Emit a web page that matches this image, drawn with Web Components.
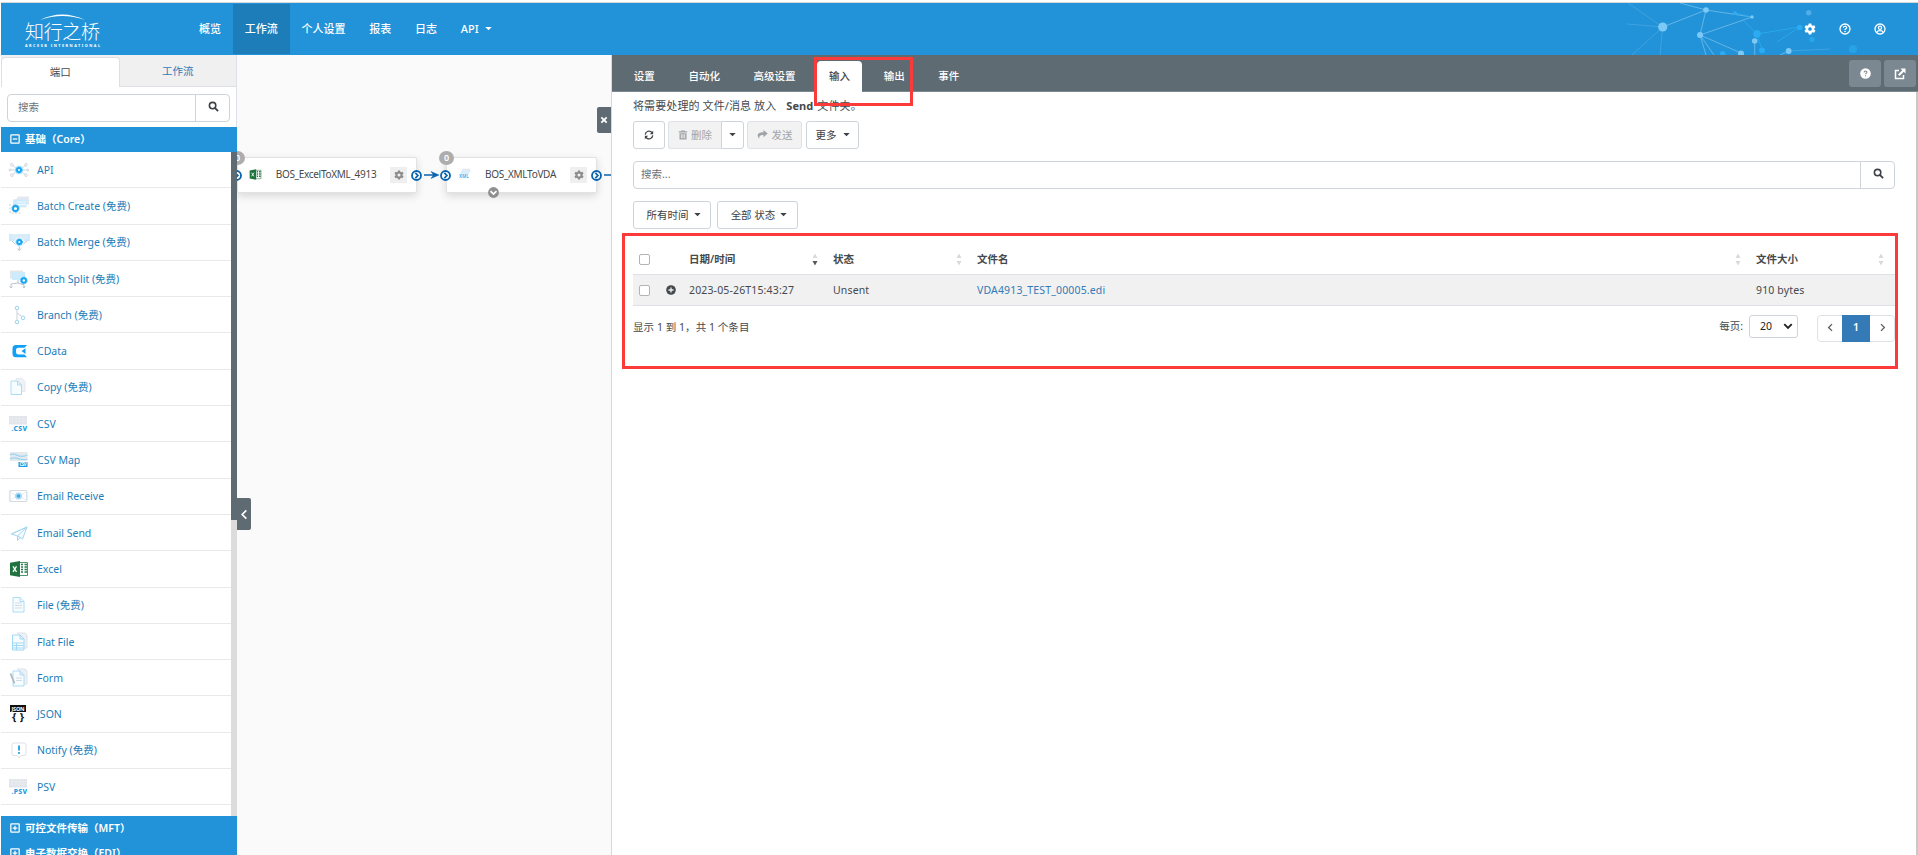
<!DOCTYPE html>
<html lang="zh-CN">
<head>
<meta charset="utf-8">
<title>知行之桥</title>
<style>
  body {
    margin: 0;
    background: #fff;
    color: #45494d;
    font-family: "Noto Sans", "Noto Sans CJK SC", sans-serif;
    font-size: 10.5px;
    line-height: 16px;
    overflow: hidden;
  }
</style>
</head>
<body>
<app-shell></app-shell>

<script>
const BASE = `
  *, :host { box-sizing: border-box; }
  svg { display: block; flex: none; }
`;

const BLUE = '#2293d8';

// 24x24 interface glyphs
const GLYPHS = {
  search: '<circle cx="10" cy="10" r="7" fill="none" stroke="currentColor" stroke-width="3.4"/><path d="M15 15l7 7" stroke="currentColor" stroke-width="4"/>',
  gear: '<path fill="currentColor" fill-rule="evenodd" d="M9.5 1h5l.7 3.2 2 1.1L20.400 4.300l2.500 4.300-2.400 2.300v2.200l2.400 2.300-2.500 4.300-3.200-1-2 1.100-.7 3.200h-5l-.7-3.200-2-1.100-3.200 1-2.500-4.300 2.400-2.300v-2.200L1.100 8.600l2.500-4.300 3.200 1 2-1.100zM12 8.300a3.700 3.700 0 1 0 0 7.400a3.700 3.700 0 0 0 0-7.400z"/>',
  help: '<circle cx="12" cy="12" r="10" fill="none" stroke="currentColor" stroke-width="2.600"/><path d="M8.700 9.800c0-4.500 7-4.300 6.600-.4-.2 2-3.200 2.200-3.200 4.400" fill="none" stroke="currentColor" stroke-width="2.400"/><circle cx="12" cy="17" r="1.600" fill="currentColor"/>',
  helpFull: '<circle cx="12" cy="12" r="11.500" fill="currentColor"/><path d="M8.900 9.800c0-4.300 6.600-4.100 6.200-.4-.2 2-3 2.100-3 4.200" fill="none" stroke="#7b8791" stroke-width="2.200"/><circle cx="12" cy="17" r="1.400" fill="#7b8791"/>',
  user: '<circle cx="12" cy="12" r="10" fill="none" stroke="currentColor" stroke-width="2.600"/><circle cx="12" cy="9.500" r="3.200" fill="none" stroke="currentColor" stroke-width="2.400"/><path d="M5.500 19c1.500-5 11.500-5 13 0" fill="none" stroke="currentColor" stroke-width="2.400"/>',
  external: '<path d="M10 5H3v16h16v-7" fill="none" stroke="currentColor" stroke-width="3"/><path d="M13 1h10v10l-3.500-3.500-8.500 8.500-3-3 8.500-8.500z" fill="currentColor"/>',
  refresh: '<path d="M3 11a9 9 0 0 1 16-5M21 13a9 9 0 0 1-16 5" fill="none" stroke="currentColor" stroke-width="3"/><path d="M22 2v8h-8zM2 22v-8h8z" fill="currentColor"/>',
  trash: '<path fill="currentColor" fill-rule="evenodd" d="M8 1h8l1 2h5v3H2V3h5zM3.500 7.500h17V23h-17zM7 10v10h2V10zm4 0v10h2V10zm4 0v10h2V10z"/>',
  share: '<path d="M14 2l9.500 8-9.500 8v-5c-6-.3-9 1-9.500 8C-.500 14-.500 7.500 14 7z" fill="currentColor"/>',
  caret: '<path d="M1 6.500h22L12 18z" fill="currentColor"/>',
  close: '<path d="M4 4l16 16M20 4L4 20" stroke="currentColor" stroke-width="5.500"/>',
  left: '<path d="M16 3l-9 9 9 9" fill="none" stroke="currentColor" stroke-width="3.600"/>',
  right: '<path d="M8 3l9 9-9 9" fill="none" stroke="currentColor" stroke-width="3.600"/>',
  down: '<path d="M3 7.500l9 9 9-9" fill="none" stroke="currentColor" stroke-width="4.500"/>',
  plus: '<rect x="2" y="2" width="20" height="20" rx="1" fill="none" stroke="currentColor" stroke-width="3"/><path d="M6.500 12h11M12 6.500v11" stroke="currentColor" stroke-width="3"/>',
  minus: '<rect x="2" y="2" width="20" height="20" rx="1" fill="none" stroke="currentColor" stroke-width="3"/><path d="M6.500 12h11" stroke="currentColor" stroke-width="3"/>',
  plusFull: '<circle cx="12" cy="12" r="11.500" fill="currentColor"/><path d="M6 12h12M12 6v12" stroke="#f1f1f1" stroke-width="3.200"/>',
  dock: '<circle cx="12" cy="12" r="9.800" fill="#fff" stroke="#0b63ae" stroke-width="4"/><path d="M9.500 6.500l5.500 5.500-5.500 5.500" fill="none" stroke="#0b63ae" stroke-width="3.800"/>',
  dockDown: '<circle cx="12" cy="12" r="11.800" fill="#8f8f8f"/><path d="M5.500 9l6.500 6.500L18.500 9" fill="none" stroke="#fff" stroke-width="3.600"/>',
};

const COG = (x, y, r = 2.2) => `<circle cx="${x}" cy="${y}" r="${r}" fill="#fff" stroke="#16a5f3" stroke-width="1.900"/><circle cx="${x}" cy="${y}" r="${r + 1.2}" fill="none" stroke="#16a5f3" stroke-width=".9" stroke-dasharray="1.200 1.100"/>`;
const SHEET = (x, y, w, h, c) => `<path d="M${x} ${y}h${w - 4}l4 4v${h - 4}h-${w}z M${x + w - 4} ${y}v4h4" fill="#f7fcff" stroke="${c}" stroke-width="1"/>`;
const GRID = '<rect x="0" y="2" width="18" height="8.500" fill="#e1e4ea"/><path d="M0 4.500h18M0 7h18M3.500 2v8M7 2v8M10.500 2v8M14 2v8" stroke="#eef0f3" stroke-width=".5"/>';

// 20x20 port pictures
const PORT_ICONS = {
  api: `<g fill="none" stroke="#cfd5dd" stroke-width="1"><path d="M1.500 10h17M3 5l4 3M17 5l-4 3M3 15l4-3M17 15l-4-3"/><g fill="#fff"><circle cx="2.800" cy="4.800" r="1.300"/><circle cx="17" cy="4.800" r="1.300"/><circle cx="2.800" cy="15.200" r="1.300"/><circle cx="17" cy="15.200" r="1.300"/><circle cx="1" cy="10" r="1"/><circle cx="18.800" cy="10" r="1"/></g></g><circle cx="10" cy="10" r="4.500" fill="#c9edfd"/>${COG(10, 10, 2)}`,
  create: `<path d="M9 .5h11v8h-3v3h-13v-8h3z" fill="#e3e8ee"/><path d="M5 3.500h12.500V11H5z" fill="#cdebfc"/><path d="M8 6h9M8 8.500h9" stroke="#fff" stroke-width=".7"/><path d="M1 8v9h11" fill="none" stroke="#cbd1d8" stroke-dasharray="2 1.500"/>${COG(6.5, 12.5, 2.5)}`,
  merge: `<path d="M0 2h7v7H0zM13.500 2H21v7h-7.500z" fill="#cdebfc"/><path d="M2 2h17v5H2z" fill="#d9ecf8"/><path d="M3 9l4 4M18 9l-5 4M10.300 12v6.500M8.500 16.500l1.800 2 1.800-2" fill="none" stroke="#bfc6ce"/><circle cx="10.300" cy="10" r="4.800" fill="#e8f6fe"/>${COG(10.3, 10, 2)}`,
  split: `<path d="M1 1.500h13v8H1z" fill="#e3e6eb"/><path d="M3 3h13v8H3z" fill="#cdebfc"/><path d="M9 11v3l-7 1v4M9 14l6 2v3M.5 17.500L2 19l1.500-1.500M13.500 17.500L15 19l1.500-1.500" fill="none" stroke="#bcc3cb"/>${COG(14.8, 11.5, 2.2)}`,
  branch: '<g fill="#fff" stroke="#9bd4f2"><circle cx="8" cy="3" r="1.800"/><circle cx="8" cy="17" r="1.800"/><circle cx="14" cy="12.800" r="1.800"/></g><path d="M8 5v10M8 8l4.800 3.500" fill="none" stroke="#cbd3db"/>',
  cdata: '<path d="M7 4h11l-2.500 2.800H9.500Q7 6.800 7 9v2.200q0 2.200 2.500 2.200h6L18 16.200H7q-3.500 0-3.500-3.500V7.500Q3.500 4 7 4z" fill="#10a0f5"/><path d="M16.500 7.200v5.800l-4-2.900z" fill="#10a0f5"/>',
  copy: `<g opacity=".8"><path d="M7 1.500h6l3 3v10H7z" fill="#eceff3" stroke="#dfe4ea"/></g>${SHEET(2, 4, 10.5, 13.5, '#abdcf5')}`,
  csv: `${GRID}<text x="2.500" y="17" font-size="6.800" font-weight="800" font-family="Noto Sans" fill="#1b9be0" textLength="15.500">.CSV</text>`,
  csvmap: '<rect x="1" y="2" width="17.500" height="9" fill="#e5e9ee"/><path d="M1 5c6-4 8 5 17.500 0M1 9c7-4 9 3 17.500 0" fill="none" stroke="#9bd4ef" stroke-width="1.300"/><rect x="9.500" y="12" width="9" height="5" fill="#1b9be0"/><text x="10.500" y="16.300" font-size="4.400" font-weight="700" font-family="Noto Sans" fill="#fff" textLength="7">CSV</text>',
  mail: '<rect x=".8" y="4.500" width="17" height="11" rx="1.200" fill="#fff" stroke="#d3dae1" stroke-width="1.200"/><path d="M1 5l6 5M17.500 5l-6 5M1 15l6-5M17.500 15l-6-5" stroke="#dfe5ea" stroke-width=".8"/><circle cx="9.500" cy="10" r="3.500" fill="#a9dbf5"/><circle cx="9.500" cy="10" r="1.800" fill="#3ea9e0"/>',
  send: '<path d="M2.500 11L18 4l-4.500 12-5-3zM8.500 13L18 4l-15.500 7M8.500 13v4.500l2.500-3" fill="#f5fbff" stroke="#a4d6ef" stroke-linejoin="round"/>',
  excel: '<path d="M9 3.500h9.500v13H9z" fill="#fff" stroke="#267a47" stroke-width=".8"/><path d="M12 5.500h2M15.500 5.500h2.500M12 8h2M15.500 8h2.500M12 10.500h2M15.500 10.500h2.500M12 13h2M15.500 13h2.500" stroke="#267a47" stroke-width="1.700"/><path d="M1 3.800L11 2v16L1 16.200z" fill="#20733f"/><path d="M4 7.300l3.500 5.500M7.500 7.300L4 12.800" stroke="#fff" stroke-width="1.300"/>',
  file: `${SHEET(4, 2.5, 11, 14.5, '#abdcf5')}<path d="M6 8h7M6 10.500h7M6 13h7" stroke="#d3dbe2"/>`,
  flat: `<path d="M8 1h8l2 2v13h-4" fill="#eef1f4" stroke="#dde2e8"/>${SHEET(3.5, 3, 11.5, 15, '#9fd8f5')}<path d="M4 11h11M4 13.500h11M4 16h11M7.500 11v7" stroke="#9fd8f5"/>`,
  form: `<path d="M8 1h8l2 2v13h-4" fill="#eef1f4" stroke="#dde2e8"/>${SHEET(4, 3, 11, 15, '#abdcf5')}<path d="M7 10h6M7 12.500h6" stroke="#d3dbe2"/><path d="M1.500 5.500l4 10" stroke="#aeb7c0" stroke-width="1.800"/>`,
  json: '<rect x="1" y="1" width="16" height="7" fill="#111"/><text x="2.500" y="6.700" font-size="5.500" font-weight="700" font-family="Noto Sans" fill="#fff" textLength="13">JSON</text><text x="3" y="17.200" font-size="11" font-weight="700" font-family="Noto Sans" fill="#111" textLength="12">{ }</text>',
  notify: '<path d="M5 3h10q2 0 2 2v9q0 1.500-2 1.500h-3l-2 2.500-2-2.500H5q-2 0-2-1.500V5q0-2 2-2z" fill="#fff" stroke="#dee3e9"/><path d="M10 5.500v5" stroke="#1f9fe3" stroke-width="1.800"/><circle cx="10" cy="13" r="1.100" fill="#1f9fe3"/>',
  psv: `${GRID}<text x="2.500" y="17" font-size="6.800" font-weight="800" font-family="Noto Sans" fill="#1b9be0" textLength="15.500">.PSV</text>`,
  xml: '<path d="M6 1h13v6h-13z" fill="#e6eaef"/><path d="M4 4h13v6H4z" fill="#d9effb"/><text x="1.500" y="16" font-size="7" font-weight="700" font-family="Noto Sans" fill="#4db4ea" textLength="15">XML</text>',
};

function mount(el, html) {
  el.attachShadow({ mode: 'open' }).innerHTML = html;
}

class UiIcon extends HTMLElement {
  constructor() {
    super();
    this.attachShadow({ mode: 'open' });
  }
  connectedCallback() {
    const size = this.getAttribute('size') || 10;
    this.shadowRoot.innerHTML = `
      <style>:host { display: inline-flex; flex: none; } svg { display: block; }</style>
      <svg width="${size}" height="${size}" viewBox="0 0 24 24">${GLYPHS[this.getAttribute('name')]}</svg>`;
  }
}
customElements.define('ui-icon', UiIcon);

class PortIcon extends HTMLElement {
  constructor() {
    super();
    this.attachShadow({ mode: 'open' });
  }
  connectedCallback() {
    const size = this.getAttribute('size') || 20;
    this.shadowRoot.innerHTML = `
      <style>:host { display: inline-flex; flex: none; } svg { display: block; overflow: visible; }</style>
      <svg width="${size}" height="${size}" viewBox="0 0 20 20">${PORT_ICONS[this.getAttribute('name')]}</svg>`;
  }
}
customElements.define('port-icon', PortIcon);

class BrandLogo extends HTMLElement {
  constructor() {
    super();
    mount(this, `
      <style>
        :host { display: block; width: 78px; height: 36px; }
        svg { display: block; overflow: visible; }
      </style>
      <svg width="78" height="36" viewBox="0 0 78 36" fill="#fff">
        <path d="M15 6Q37-5 60 6Q37-2 15 6z"/>
        <text x="0" y="25" font-family="Noto Sans CJK SC" font-weight="300" font-size="19" textLength="75">知行之桥</text>
        <text x="0" y="33" font-family="Noto Sans" font-weight="700" font-size="3.800" textLength="75">ARCESB INTERNATIONAL</text>
      </svg>`);
  }
}
customElements.define('brand-logo', BrandLogo);

class AppHeader extends HTMLElement {
  constructor() {
    super();
    mount(this, `
      <style>
        ${BASE}
        :host { display: flex; height: 52px; background: ${BLUE}; color: #fff; font-size: 11px; font-weight: 500; }
        brand-logo { margin: 11px 0 0 24px; }
        nav { display: flex; margin-left: 84px; padding: 1px 0; }
        a { display: flex; align-items: center; padding: 0 11.900px 1px; gap: 6px; }
        a.on { background: #1c7db9; }
        .right { margin-left: auto; display: grid; width: 358px; }
        .right > * { grid-area: 1 / 1; }
        .tools { display: flex; justify-content: flex-end; align-items: center; gap: 23px; padding: 0 32px 0 0; }
      </style>
      <brand-logo></brand-logo>
      <nav>
        <a>概览</a><a class="on">工作流</a><a>个人设置</a><a>报表</a><a>日志</a>
        <a>API <ui-icon name="caret" size="7"></ui-icon></a>
      </nav>
      <div class="right">
        <svg width="358" height="52" viewBox="1560 3 358 52">
          <g stroke="#8fcdf3" stroke-width="1" opacity=".6">
            <path d="M1662.700 27L1706 10 1700 35 1741 53M1706 10L1680 3M1706 10L1752 17L1700 35M1700 35L1706 55M1700 35L1714 55M1754.700 41V55M1788.700 51L1780 55" fill="none"/>
            <path d="M1662.700 27L1628 3M1662.700 27L1627 24M1662.700 27L1632 55M1662.700 27L1660 55M1788.700 51L1830 49" fill="none" opacity=".45"/>
          </g>
          <path d="M1757 34L1799.700 27M1757 34L1743 20M1757 34L1762 50M1799.700 27L1777 42M1735 13L1752 17" stroke="#2bacf0" fill="none" opacity=".8"/>
          <g fill="#7cc9f7">
            <circle cx="1662.700" cy="27" r="4.600"/><circle cx="1706" cy="10" r="2.800"/><circle cx="1700" cy="35" r="3"/>
            <circle cx="1752" cy="17" r="1.700"/><circle cx="1754.700" cy="41" r="2.800"/><circle cx="1741" cy="53.500" r="3"/><circle cx="1788.700" cy="51" r="2.900"/>
            <circle cx="1808.700" cy="12.700" r="2.700" opacity=".5"/>
          </g>
          <g fill="#2bacf2">
            <circle cx="1757" cy="34" r="3.700"/><circle cx="1762" cy="50.300" r="2.900"/><circle cx="1722.700" cy="54" r="2.900"/><circle cx="1735" cy="13" r="2"/>
            <circle cx="1799.700" cy="27.500" r="2.800"/><circle cx="1812" cy="39.500" r="2.800" opacity=".7"/><circle cx="1853" cy="49" r="4" opacity=".6"/>
          </g>
        </svg>
        <div class="tools">
          <ui-icon name="gear" size="12"></ui-icon><ui-icon name="help" size="12"></ui-icon><ui-icon name="user" size="12"></ui-icon>
        </div>
      </div>`);
  }
}
customElements.define('app-header', AppHeader);

class SearchBox extends HTMLElement {
  constructor() {
    super();
    mount(this, `
      <style>
        ${BASE}
        :host { display: flex; flex: none; height: 28px; border: 1px solid #ced4da; border-radius: 4px; background: #fff; color: #6b7278; }
        .field { flex: 1; display: flex; align-items: center; padding: 0 0 2px var(--inset, 10px); }
        .go { width: 34px; display: flex; align-items: center; justify-content: center; padding: 0 0 3px 1px; border-left: 1px solid #ced4da; color: #3d4145; }
      </style>
      <div class="field"><slot></slot></div>
      <div class="go"><ui-icon name="search" size="11"></ui-icon></div>`);
  }
}
customElements.define('search-box', SearchBox);

class PortItem extends HTMLElement {
  constructor() {
    super();
    mount(this, `
      <style>
        ${BASE}
        :host { display: flex; align-items: center; height: 36.310px; border-bottom: 1px solid #e9e9e9; padding-left: 8px; gap: 8px; color: #1c7db9; }
      </style>
      <port-icon name="${this.getAttribute('icon')}"></port-icon>
      <span><slot></slot></span>`);
  }
}
customElements.define('port-item', PortItem);

class GroupBar extends HTMLElement {
  constructor() {
    super();
    mount(this, `
      <style>
        ${BASE}
        :host { display: flex; align-items: center; flex: none; height: 25px; padding: 0 0 1px 9px; gap: 5px; background: ${BLUE}; color: #fff; font-weight: 600; }
      </style>
      <ui-icon name="${this.getAttribute('icon')}" size="10"></ui-icon>
      <span><slot></slot></span>`);
  }
}
customElements.define('group-bar', GroupBar);

const PORTS = [
  ['api', 'API'], ['create', 'Batch Create (免费)'], ['merge', 'Batch Merge (免费)'], ['split', 'Batch Split (免费)'],
  ['branch', 'Branch (免费)'], ['cdata', 'CData'], ['copy', 'Copy (免费)'], ['csv', 'CSV'], ['csvmap', 'CSV Map'],
  ['mail', 'Email Receive'], ['send', 'Email Send'], ['excel', 'Excel'], ['file', 'File (免费)'], ['flat', 'Flat File'],
  ['form', 'Form'], ['json', 'JSON'], ['notify', 'Notify (免费)'], ['psv', 'PSV'],
];

class PortSidebar extends HTMLElement {
  constructor() {
    super();
    mount(this, `
      <style>
        ${BASE}
        :host { display: flex; flex-direction: column; width: 236px; flex: none; background: #fff; border-right: 1px solid #dee2e6; }
        .tabs { display: flex; flex: none; height: 32px; padding-top: 2px; background: #f0f0f0; }
        .tabs span { flex: 1; display: flex; align-items: center; justify-content: center; padding-bottom: 2px; color: #337ab7; border-bottom: 1px solid #dcdfe3; }
        .tabs .on { background: #fff; color: #45494d; border: 1px solid #dcdfe3; border-bottom: 0; border-radius: 4px 4px 0 0; }
        search-box { margin: 7px 6px 5px 6px; }
        group-bar { margin-right: -1px; }
        .scroll { display: flex; flex: none; height: 664px; margin-right: -1px; }
        .list { flex: 1; overflow: hidden; }
        .bar { width: 6px; background: #dcdcdc; }
        .bar i { display: block; height: 368px; background: #5f6b73; }
      </style>
      <div class="tabs"><span class="on">端口</span><span>工作流</span></div>
      <search-box>搜索</search-box>
      <group-bar icon="minus">基础（Core）</group-bar>
      <div class="scroll">
        <div class="list">${PORTS.map(([i, t]) => `<port-item icon="${i}">${t}</port-item>`).join('')}</div>
        <div class="bar"><i></i></div>
      </div>
      <group-bar icon="plus">可控文件传输（MFT）</group-bar>
      <group-bar icon="plus">电子数据交换（EDI）</group-bar>`);
  }
}
customElements.define('port-sidebar', PortSidebar);

class FlowNode extends HTMLElement {
  constructor() {
    super();
    mount(this, `
      <style>
        ${BASE}
        :host { position: absolute; display: flex; align-items: center; height: 36px; background: #fff; border: 1px solid #e2e2e2; border-radius: 2px; box-shadow: 0 3px 9px rgba(0,0,0,.14); padding: 0 9px 2px 11px; }
        .name { flex: 1; text-align: center; white-space: nowrap; font-size: 10px; letter-spacing: -.3px; }
        .cfg { width: 17px; height: 16px; margin-top: 2px; display: flex; align-items: center; justify-content: center; background: #efefef; color: #8c8c8c; }
        .count { position: absolute; left: -8px; top: -7px; width: 15px; height: 14px; border-radius: 50%; background: #adadad; color: #fff; font-size: 9px; font-weight: 600; line-height: 13px; text-align: center; }
        .in, .out, .more { position: absolute; }
        .in { left: -7px; top: 12px; }
        .out { right: -6px; top: 12px; }
        .more { left: 41px; bottom: -6px; }
      </style>
      <port-icon name="${this.getAttribute('icon')}" size="13"></port-icon>
      <span class="name"><slot></slot></span>
      <span class="cfg"><ui-icon name="gear" size="10"></ui-icon></span>
      <span class="count">0</span>
      <ui-icon class="in" name="dock" size="11"></ui-icon>
      <ui-icon class="out" name="dock" size="11"></ui-icon>
      ${this.hasAttribute('more') ? '<ui-icon class="more" name="dockDown" size="11"></ui-icon>' : ''}`);
  }
}
customElements.define('flow-node', FlowNode);

class FlowCanvas extends HTMLElement {
  constructor() {
    super();
    mount(this, `
      <style>
        ${BASE}
        :host { display: block; position: relative; flex: none; width: 374px; background: #fafafa; overflow: hidden; }
        .wires { position: absolute; left: 0; top: 0; }
        .first { left: 0; width: 180px; }
        .second { left: 209px; width: 151px; }
        flow-node { top: 102px; }
        .tab { position: absolute; display: flex; align-items: center; justify-content: center; background: #5f6b73; color: #fff; }
        .hide { left: 0; top: 443px; width: 14px; height: 32px; border-radius: 0 2px 2px 0; }
        .shut { right: 0; top: 52px; width: 14px; height: 26px; border-radius: 2px 0 0 2px; }
      </style>
      <svg class="wires" width="374" height="200" stroke="#0b63ae" stroke-width="1.500" fill="none">
        <path d="M187 120h13M367 120h8"/><path d="M194 116.500l8 3.500-8 3.500 2.500-3.500z" fill="#0b63ae" stroke-width=".5"/>
      </svg>
      <flow-node class="first" icon="excel">BOS_ExcelToXML_4913</flow-node>
      <flow-node class="second" icon="xml" more>BOS_XMLToVDA</flow-node>
      <span class="tab hide"><ui-icon name="left" size="11"></ui-icon></span>
      <span class="tab shut"><ui-icon name="close" size="8"></ui-icon></span>`);
  }
}
customElements.define('flow-canvas', FlowCanvas);

class ToolButton extends HTMLElement {
  constructor() {
    super();
    mount(this, `
      <style>
        ${BASE}
        :host { display: inline-flex; align-items: center; justify-content: center; gap: 4px; height: 28px; border: 1px solid #ced4da; border-radius: 3px; background: #fff; color: #3d4145; padding-bottom: 1px; white-space: nowrap; }
        :host([disabled]) { background: #f2f2f2; color: #a1a4a8; border-color: #dee2e6; }
      </style>
      <slot></slot>`);
  }
}
customElements.define('tool-button', ToolButton);

class SortMark extends HTMLElement {
  constructor() {
    super();
    mount(this, `
      <style>:host { display: inline-flex; } svg { display: block; }</style>
      <svg width="6" height="13" viewBox="0 0 6 13"><path d="M3 .5l2.500 4.500h-5z" fill="#dadada"/><path d="M3 12.500L.5 8h5z" fill="${this.hasAttribute('desc') ? '#55595d' : '#dadada'}"/></svg>`);
  }
}
customElements.define('sort-mark', SortMark);

class FileTable extends HTMLElement {
  constructor() {
    super();
    mount(this, `
      <style>
        ${BASE}
        :host { display: block; }
        .row { display: grid; grid-template-columns: 24px 32px 144px 144px 779px 1fr; height: 31px; align-items: center; border-bottom: 1px solid #dee2e6; }
        .head { font-weight: 600; }
        .head > span { display: flex; justify-content: space-between; align-items: center; padding-right: 15px; }
        .head > span:last-child { padding-right: 11px; }
        .body { background: #f1f1f1; letter-spacing: .15px; }
        .box { width: 11px; height: 11px; margin-left: 6px; border: 1px solid #b3b3b3; border-radius: 2px; background: #fff; }
        .open { display: flex; padding-left: 9px; }
        a { color: #337ab7; }
        .foot { display: flex; align-items: flex-start; padding-top: 9px; height: 40px; }
        .info { padding-top: 4px; letter-spacing: .05px; }
        .per { margin-left: auto; padding-top: 3px; }
        .pick { display: flex; align-items: center; justify-content: space-between; width: 49px; height: 23px; margin: 0 19px 0 6px; border: 1px solid #ced4da; border-radius: 3px; padding: 0 4px 1px 10px; color: #222; }
        .pages { display: flex; width: 78px; height: 27px; border: 1px solid #dee2e6; border-radius: 4px; }
        .pages span { flex: 1; display: flex; align-items: center; justify-content: center; padding-bottom: 2px; color: #5c6268; }
        .pages .on { flex: none; width: 28px; margin: -1px 0; background: #337ab7; color: #fff; font-weight: 600; padding-bottom: 3px; }
      </style>
      <div class="row head">
        <i class="box"></i><i></i>
        <span>日期/时间 <sort-mark desc></sort-mark></span><span>状态 <sort-mark></sort-mark></span>
        <span>文件名 <sort-mark></sort-mark></span><span>文件大小 <sort-mark></sort-mark></span>
      </div>
      <div class="row body">
        <i class="box"></i><i class="open"><ui-icon name="plusFull" size="10"></ui-icon></i>
        <span>2023-05-26T15:43:27</span><span>Unsent</span><a>VDA4913_TEST_00005.edi</a><span>910 bytes</span>
      </div>
      <div class="foot">
        <span class="info">显示 1 到 1，共 1 个条目</span>
        <span class="per">每页:</span>
        <span class="pick">20 <ui-icon name="down" size="10"></ui-icon></span>
        <div class="pages">
          <span><ui-icon name="left" size="9"></ui-icon></span><span class="on">1</span><span><ui-icon name="right" size="9"></ui-icon></span>
        </div>
      </div>`);
  }
}
customElements.define('file-table', FileTable);

class DetailPanel extends HTMLElement {
  constructor() {
    super();
    mount(this, `
      <style>
        ${BASE}
        :host { display: flex; flex-direction: column; flex: 1; background: #fff; border-left: 1px solid #d6d9dc; }
        header { display: flex; flex: none; height: 37px; background: #5f6b73; border-bottom: 1px solid #7b8791; color: #fff; padding: 0 2px 0 10px; }
        header > span { display: flex; align-items: center; margin: 6px 10px 0 0; padding: 0 11.800px 1px; font-weight: 500; }
        header > .on { background: #fff; color: #45494d; border-radius: 4px 4px 0 0; margin-bottom: -1px; padding-bottom: 2px; }
        .acts { display: flex; gap: 3px; margin-left: auto; padding-top: 5px; }
        .acts i { width: 32px; height: 27px; display: flex; align-items: center; justify-content: center; border-radius: 3px; background: #7b8791; }
        .body { flex: 1; padding: 6px 21px 0; border-right: 2px solid #c9c9c9; }
        .tip { font-size: 11px; white-space: pre; letter-spacing: .1px; }
        .tip b { margin: 0 1px 0 4px; }
        .line { display: flex; margin-top: 7px; }
        search-box { margin-top: 12px; --inset: 7px; }
        .filters { gap: 6px; margin-top: 12px; }
        .del { width: 53px; border-radius: 3px 0 0 3px; gap: 3px; border-right: 0; }
        .drop { width: 23px; border-radius: 0 3px 3px 0; margin-right: 3px; }
        file-table { margin-top: 15px; }
      </style>
      <header>
        <span>设置</span><span>自动化</span><span>高级设置</span><span class="on">输入</span><span>输出</span><span>事件</span>
        <div class="acts"><i><ui-icon name="helpFull" size="11"></ui-icon></i><i><ui-icon name="external" size="12"></ui-icon></i></div>
      </header>
      <div class="body">
        <div class="tip">将需要处理的 文件/消息 放入  <b>Send</b> 文件夹。</div>
        <div class="line">
          <tool-button style="width:32px;margin-right:3px"><ui-icon name="refresh" size="10"></ui-icon></tool-button>
          <tool-button class="del" disabled><ui-icon name="trash" size="10"></ui-icon>删除</tool-button>
          <tool-button class="drop"><ui-icon name="caret" size="7"></ui-icon></tool-button>
          <tool-button disabled style="width:55px;margin-right:4px"><ui-icon name="share" size="11"></ui-icon>发送</tool-button>
          <tool-button style="width:53px;gap:6px">更多<ui-icon name="caret" size="7"></ui-icon></tool-button>
        </div>
        <search-box>搜索...</search-box>
        <div class="line filters">
          <tool-button style="width:78px;gap:5px;padding-left:3px">所有时间<ui-icon name="caret" size="7"></ui-icon></tool-button>
          <tool-button style="width:81px;gap:5px;padding-left:3px">全部 状态<ui-icon name="caret" size="7"></ui-icon></tool-button>
        </div>
        <file-table></file-table>
      </div>`);
  }
}
customElements.define('detail-panel', DetailPanel);

class MarkFrame extends HTMLElement {
  constructor() {
    super();
    mount(this, `
      <style>:host { display: block; position: absolute; box-sizing: border-box; border: 3px solid #fb3a3a; pointer-events: none; }</style>`);
  }
}
customElements.define('mark-frame', MarkFrame);

class AppShell extends HTMLElement {
  constructor() {
    super();
    mount(this, `
      <style>
        ${BASE}
        :host { display: flex; flex-direction: column; position: relative; height: 855px; overflow: hidden; padding-left: 1px; }
        .edge { height: 3px; flex: none; border-bottom: 1px solid #d9d9d9; }
        app-header { flex: none; }
        main { display: flex; flex: 1; min-height: 0; }
        .tabs-mark { left: 814px; top: 57px; width: 99px; height: 49px; }
        .table-mark { left: 622px; top: 233px; width: 1276px; height: 136px; }
      </style>
      <div class="edge"></div>
      <app-header></app-header>
      <main>
        <port-sidebar></port-sidebar>
        <flow-canvas></flow-canvas>
        <detail-panel></detail-panel>
      </main>
      <mark-frame class="tabs-mark"></mark-frame>
      <mark-frame class="table-mark"></mark-frame>`);
  }
}
customElements.define('app-shell', AppShell);
</script>
</body>
</html>
